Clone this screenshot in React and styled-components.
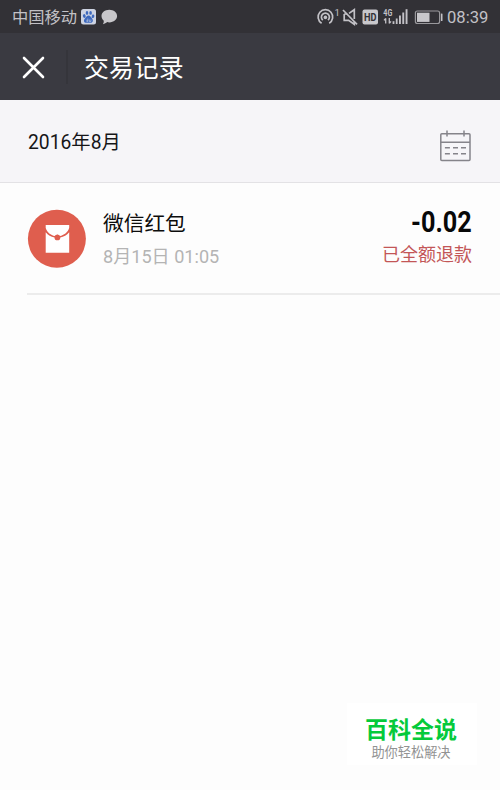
import React from "react";
import styled, { createGlobalStyle } from "styled-components";

const GlobalStyle = createGlobalStyle`
  * { box-sizing: border-box; }
  body { margin: 0; background: #fdfdfd; }
`;

const Screen = styled.main`
  position: relative;
  display: flex;
  flex-direction: column;
  width: 500px;
  height: 790px;
  overflow: hidden;
  background: #fdfdfd;
  font-family: Roboto, "Noto Sans CJK SC", sans-serif;
  white-space: nowrap;
`;

const StatusBar = styled.header`
  display: flex;
  justify-content: space-between;
  height: 33px;
  padding: 0 11px 0 12px;
  background: #323136;
  color: #c2c1c6;
`;

const StatusGroup = styled.div`
  display: flex;
  align-items: center;
  height: 34px;
`;

const Carrier = styled.span`
  width: 68px;
  padding-top: 2px;
  font-size: 16.3px;
  line-height: 34px;
`;

const Clock = styled.span`
  width: 42px;
  padding-top: 2px;
  font-size: 16.6px;
  line-height: 34px;
`;

const StatusIcons = styled.svg`
  display: block;
  width: 131px;
  height: 34px;
`;

const NoticeIcons = styled.svg`
  display: block;
  width: 40px;
  height: 34px;
`;

const NavBar = styled.nav`
  display: flex;
  align-items: center;
  height: 67px;
  padding-left: 22px;
  background: #3a3a41;
`;

const CloseIcon = styled.svg`
  display: block;
  width: 23px;
  height: 23px;
  margin-top: 1px;
`;

const NavDivider = styled.div`
  width: 2px;
  height: 34px;
  margin: 0 16px 0 21px;
  background: #35353b;
`;

const Title = styled.h1`
  margin: 4px 0 0;
  color: #fff;
  font-size: 24.9px;
  font-weight: 400;
  line-height: 36px;
`;

const MonthBar = styled.section`
  display: flex;
  justify-content: space-between;
  height: 83px;
  padding: 30px 28px 0;
  background: #f6f5f8;
  border-bottom: 1px solid #e3e2e5;
`;

const Month = styled.h2`
  margin: 0;
  color: #161618;
  font-size: 19.3px;
  font-weight: 400;
  line-height: 26px;
`;

const CalendarIcon = styled.svg`
  display: block;
  width: 33px;
  height: 33px;
`;

const Transaction = styled.article`
  display: flex;
  height: 112px;
  margin-left: 27px;
  padding: 26px 28px 0 0;
  border-bottom: 2px solid #ececec;
`;

const PacketIcon = styled.svg`
  display: block;
  flex: none;
  width: 60px;
  height: 60px;
`;

const Details = styled.div`
  flex: 1;
  padding-left: 16px;
`;

const Name = styled.div`
  padding-top: 1px;
  color: #0c0c0c;
  font-size: 20.7px;
  line-height: 28px;
`;

const Time = styled.div`
  margin-top: 6px;
  color: #b4b4b4;
  font-size: 18.1px;
  line-height: 26px;
`;

const Outcome = styled.div`
  display: flex;
  flex-direction: column;
  align-items: flex-end;
`;

const Amount = styled.div`
  margin-top: -1px;
  color: #080808;
  font-size: 29px;
  font-weight: 700;
  line-height: 28px;
  transform: scaleX(0.87);
  transform-origin: right center;
`;

const Refund = styled.div`
  margin-top: 6px;
  color: #c35657;
  font-size: 18px;
  line-height: 26px;
`;

const Watermark = styled.aside`
  position: absolute;
  left: 347px;
  top: 703px;
  width: 130px;
  height: 62px;
  padding: 14px 2px 0 0;
  background: #fff;
  text-align: center;
`;

const Brand = styled.div`
  color: #05ca3b;
  font-size: 23px;
  font-weight: 700;
  line-height: 28px;
`;

const Slogan = styled.div`
  color: #929292;
  font-size: 13.2px;
  line-height: 15px;
`;

const SvgLabel = styled.text`
  font-family: Roboto, sans-serif;
  font-size: ${(p) => p.$size}px;
  font-weight: ${(p) => p.$weight || 400};
  fill: ${(p) => p.$fill || "#c2c1c6"};
`;

function Notices() {
  return (
    <NoticeIcons viewBox="80 0 40 34">
      <rect x="81" y="9" width="15" height="15.5" rx="2.5" fill="#cdd3e2" />
      <g fill="#3c68bd">
        <ellipse cx="84.3" cy="16" rx="1.4" ry="1.9" transform="rotate(-15 84.3 16)" />
        <ellipse cx="87" cy="12.9" rx="1.3" ry="1.9" />
        <ellipse cx="90.6" cy="12.9" rx="1.3" ry="1.9" />
        <ellipse cx="93" cy="16.3" rx="1.3" ry="1.8" transform="rotate(15 93 16.3)" />
        <path d="M88.6 15.5c1.8 0 2.2 1.6 3.3 2.7 1.7 1.7 1.1 4.6-1.2 4.6-1.4 0-2.8-.3-4.2 0-2.4.4-3.4-2.6-1.6-4.4 1.2-1.2 2-2.9 3.7-2.9z" />
      </g>
      <path d="M86.3 20.3h1.4m-1.2 1.2h1.3v-3m1.5 1v2h1.6v-2" fill="none" stroke="#cdd3e2" strokeWidth=".6" />
      <path d="M109.3 9.8c4.4 0 7.8 2.8 7.8 6.3s-3.4 6.3-7.8 6.3c-.8 0-1.5-.1-2.2-.3-1 1-2.4 1.8-4.2 2.1.7-1 1-2.3.9-3.5-1.5-1.2-2.3-2.8-2.3-4.6 0-3.5 3.4-6.3 7.8-6.3z" fill="#c8c7cb" />
    </NoticeIcons>
  );
}

function SystemIcons() {
  return (
    <StatusIcons viewBox="316 0 131 34">
      <g fill="none" stroke="#c2c1c6" strokeWidth="1.7">
        <path d="M321.6 23.2a7.3 7.3 0 1 1 7.6 0" />
        <path d="M322.8 20.1a4 4 0 1 1 5.2 0" />
      </g>
      <circle cx="325.4" cy="17.4" r="1.8" fill="#c2c1c6" />
      <SvgLabel x="334.6" y="15.8" $size={9.5}>1</SvgLabel>
      <g fill="none" stroke="#c2c1c6" strokeWidth="1.7">
        <path d="M343 10l14 14.3" />
        <path d="M349 13.4l5.3-3.7v9.3M344.2 14v6.3h4.4l5.7 4v-2.6M344.2 14h3" />
      </g>
      <rect x="362.5" y="9.5" width="15.5" height="15" rx="2" fill="#c8c7cb" />
      <SvgLabel x="364" y="20.8" $size={10.5} $weight={700} $fill="#323136" textLength="12.5" lengthAdjust="spacingAndGlyphs">HD</SvgLabel>
      <SvgLabel x="383.3" y="15.9" $size={9.5} $weight={700} textLength="9" lengthAdjust="spacingAndGlyphs">4G</SvgLabel>
      <g fill="none" stroke="#c2c1c6" strokeWidth="1.3">
        <path d="M385.7 23.5v-5.2m-1.7 2.1 1.7-1.9M389.3 18v5.5m1.7-2.2-1.7 2" />
      </g>
      <g fill="#c2c1c6">
        <rect x="392.6" y="21.2" width="1.8" height="2.8" />
        <rect x="395.8" y="18.5" width="1.8" height="5.5" />
        <rect x="399" y="15.5" width="1.9" height="8.5" />
        <rect x="402.3" y="12.5" width="1.9" height="11.5" />
        <rect x="405.6" y="9.2" width="1.9" height="14.8" />
      </g>
      <rect x="415.4" y="11" width="24.2" height="12.5" rx="2" fill="none" stroke="#99989c" strokeWidth="1.2" />
      <rect x="417" y="12.7" width="12.5" height="9.2" fill="#c8c7cb" />
      <rect x="440.9" y="13.5" width="1.6" height="7.5" rx=".6" fill="#c2c1c6" />
    </StatusIcons>
  );
}

export default function App() {
  return (
    <Screen>
      <GlobalStyle />
      <StatusBar>
        <StatusGroup>
          <Carrier>中国移动</Carrier>
          <Notices />
        </StatusGroup>
        <StatusGroup>
          <SystemIcons />
          <Clock>08:39</Clock>
        </StatusGroup>
      </StatusBar>
      <NavBar>
        <CloseIcon viewBox="0 0 23 23" fill="none" stroke="#fff" strokeWidth="2.6" strokeLinecap="round">
          <path d="M2 2l19 19M21 2L2 21" />
        </CloseIcon>
        <NavDivider />
        <Title>交易记录</Title>
      </NavBar>
      <MonthBar>
        <Month>2016年8月</Month>
        <CalendarIcon viewBox="0 0 33 33" fill="none" stroke="#85848a" strokeWidth="1.5">
          <rect x="1.8" y="3.7" width="29.2" height="26.8" rx="1" />
          <path d="M1.8 12.3h29.2M8 .6v6M25 .6v6" />
          <path d="M5.9 17.8h5M14 17.8h5M22 17.8h5M5.9 23.8h5M14 23.8h5M22 23.8h5" />
        </CalendarIcon>
      </MonthBar>
      <Transaction>
        <PacketIcon viewBox="27 209 60 60">
          <circle cx="56.9" cy="238.8" r="29" fill="#df5e4e" />
          <path d="M45.7 225h23.5v2.7c-1.2 4.7-5.7 7.7-9.2 8.2a3 3 0 0 0-5.2 0c-3.8-.7-7.8-3.5-9.1-8z" fill="#fff" />
          <path d="M45.7 232.2c2.3 2.9 5.3 4.7 8.8 5.2a2.9 2.9 0 0 0 5.8 0c3.5-.5 6.5-2.4 8.9-5.2v20.5H45.7z" fill="#fff" />
          <circle cx="57.4" cy="236.9" r="2.2" fill="#df5e4e" />
        </PacketIcon>
        <Details>
          <Name>微信红包</Name>
          <Time>8月15日 01:05</Time>
        </Details>
        <Outcome>
          <Amount>-0.02</Amount>
          <Refund>已全额退款</Refund>
        </Outcome>
      </Transaction>
      <Watermark>
        <Brand>百科全说</Brand>
        <Slogan>助你轻松解决</Slogan>
      </Watermark>
    </Screen>
  );
}
